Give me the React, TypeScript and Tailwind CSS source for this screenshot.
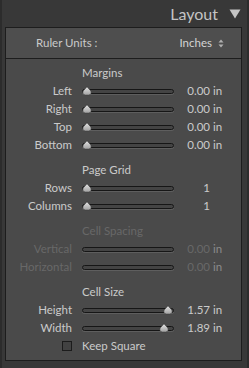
import React from "react";

const font = { fontFamily: "Lato, 'Open Sans', 'Liberation Sans', sans-serif" };

function Thumb() {
  return (
    <svg width="10" height="9" viewBox="0 0 10 9" className="absolute top-1/2 -translate-y-1/2 -translate-x-1/2">
      <defs>
        <linearGradient id="tg" x1="0" y1="0" x2="0" y2="1">
          <stop offset="0" stopColor="#e4e4e4" />
          <stop offset="1" stopColor="#a0a0a0" />
        </linearGradient>
      </defs>
      <path d="M5 0.3 L8.6 4.2 Q9.6 5.4 9 7 Q8.4 8.6 6.5 8.6 L3.5 8.6 Q1.6 8.6 1 7 Q0.4 5.4 1.4 4.2 Z" fill="url(#tg)" stroke="#3a3a3a" strokeWidth="0.6" />
    </svg>
  );
}

function Slider({ pos, disabled }: { pos?: number; disabled?: boolean }) {
  return (
    <div className="relative w-[92px] h-[9px] flex items-center">
      <div className="w-full h-[5px] rounded-full bg-[#444444] border border-[#161616] shadow-[0_1px_0_#5e5e5e]" />
      {!disabled && pos !== undefined && (
        <div className="absolute top-0 h-[9px]" style={{ left: `${pos}px` }}>
          <Thumb />
        </div>
      )}
    </div>
  );
}

function Row({
  label,
  value,
  unit,
  pos,
  disabled,
}: {
  label: string;
  value: string;
  unit?: string;
  pos?: number;
  disabled?: boolean;
}) {
  const lc = disabled ? "text-[#686868]" : "text-[#cacaca]";
  return (
    <div className="h-[18px] flex items-center">
      <div className={`w-[66px] text-right text-[11.5px] ${lc}`}>{label}</div>
      <div className="ml-[10px]">
        <Slider pos={pos} disabled={disabled} />
      </div>
      <div className={`w-[36px] text-right text-[11.5px] ${disabled ? "text-[#686868]" : "text-[#cacaca]"}`}>{value}</div>
      <div className={`ml-[3px] text-[11.5px] ${disabled ? "text-[#8a8a8a]" : "text-[#cacaca]"}`}>{unit ?? ""}</div>
    </div>
  );
}

function Header({ title, disabled }: { title: string; disabled?: boolean }) {
  return (
    <div className="h-[18px] flex items-center pl-[76px]">
      <span className={`text-[11.5px] ${disabled ? "text-[#686868]" : "text-[#cacaca]"}`}>{title}</span>
    </div>
  );
}

export default function App() {
  return (
    <div
      className="w-[249px] h-[368px] bg-[#383838] border-l-2 border-r-2 border-[#2c2c2c] flex flex-col"
      style={font}
    >
      <div className="h-[27px] flex items-center justify-end pr-[6px]">
        <span className="text-[16px] text-[#c4c4c4] leading-none mt-[1px]">Layout</span>
        <svg width="12" height="10" viewBox="0 0 12 10" className="ml-[11px]">
          <path d="M0.5 0.5 L11.5 0.5 L6 9.5 Z" fill="#c4c4c4" />
        </svg>
      </div>
      <div className="ml-[3px] mr-[5px] h-[334px] border border-[#1d1d1d] bg-[#4a4a4a] flex flex-col">
        <div className="h-[31px] bg-[#4e4e4e] border-b border-[#1d1d1d] flex items-center pl-[30px] pr-[17px]">
          <span className="text-[11.5px] text-[#cacaca]">Ruler Units :</span>
          <span className="ml-auto text-[11.5px] text-[#d4d4d4]">Inches</span>
          <svg width="6" height="9" viewBox="0 0 6 9" className="ml-[6px]">
            <path d="M3 0.5 L5.5 3.5 L0.5 3.5 Z" fill="#b0b0b0" />
            <path d="M3 8.5 L5.5 5.5 L0.5 5.5 Z" fill="#b0b0b0" />
          </svg>
        </div>
        <div className="flex flex-col pt-[5px] gap-[7px]">
          <div className="flex flex-col">
            <Header title="Margins" />
            <Row label="Left" value="0.00" unit="in" pos={5} />
            <Row label="Right" value="0.00" unit="in" pos={5} />
            <Row label="Top" value="0.00" unit="in" pos={5} />
            <Row label="Bottom" value="0.00" unit="in" pos={5} />
          </div>
          <div className="flex flex-col">
            <Header title="Page Grid" />
            <Row label="Rows" value="1" pos={5} />
            <Row label="Columns" value="1" pos={5} />
          </div>
          <div className="flex flex-col">
            <Header title="Cell Spacing" disabled />
            <Row label="Vertical" value="0.00" unit="in" disabled />
            <Row label="Horizontal" value="0.00" unit="in" disabled />
          </div>
          <div className="flex flex-col">
            <Header title="Cell Size" />
            <Row label="Height" value="1.57" unit="in" pos={86} />
            <Row label="Width" value="1.89" unit="in" pos={82} />
            <div className="h-[18px] flex items-center">
              <div className="w-[66px] flex justify-end">
                <div className="w-[10px] h-[10px] border border-[#1c1c1c] bg-[#424242]" />
              </div>
              <span className="ml-[10px] text-[11.5px] text-[#cacaca]">Keep Square</span>
            </div>
          </div>
        </div>
      </div>
    </div>
  );
}
